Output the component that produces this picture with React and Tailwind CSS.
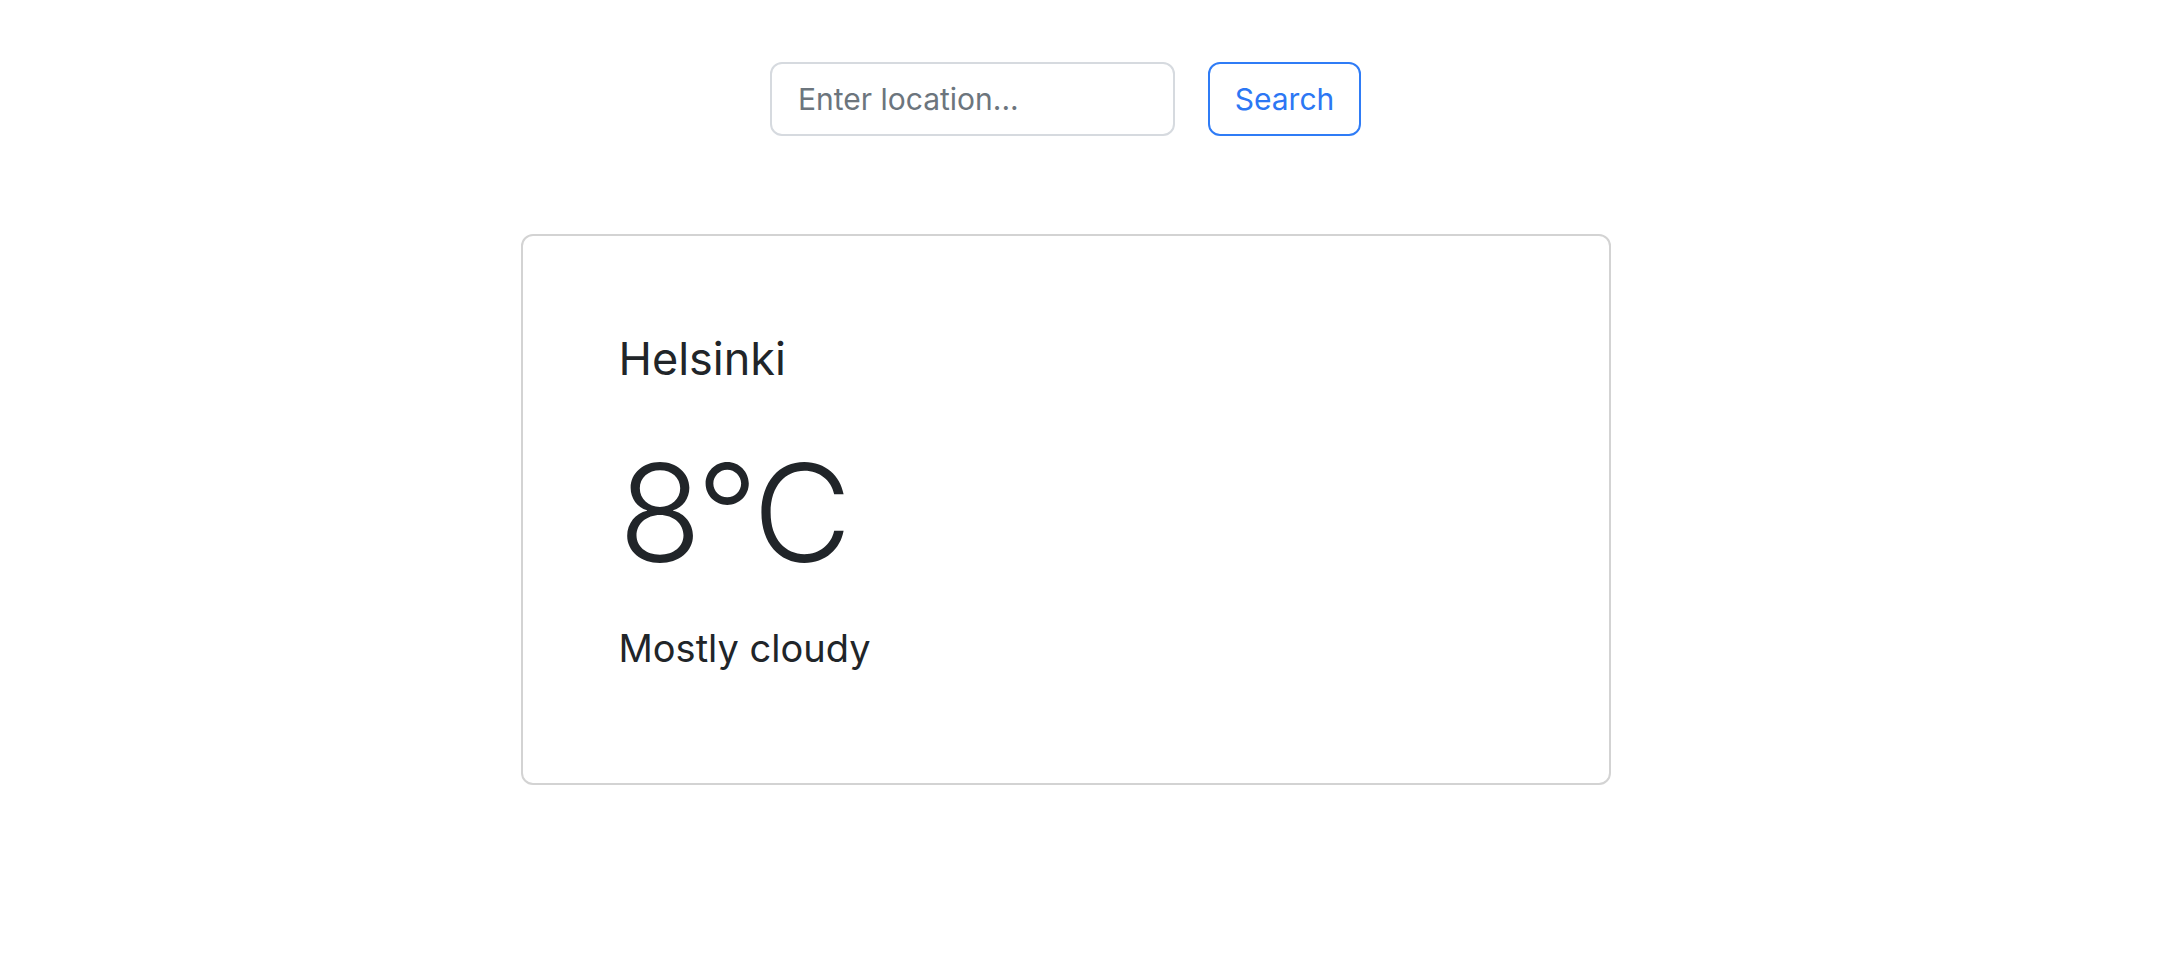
import { useState } from "react";

export default function App() {
  const [query, setQuery] = useState("");

  return (
    <div
      className="min-h-screen bg-white pr-[52px] text-[#212529]"
      style={{ fontFamily: "Inter, 'Noto Sans', sans-serif" }}
    >
      {/* Search bar */}
      <div className="flex justify-center gap-[33px] pt-[62px]">
        <input
          type="text"
          value={query}
          onChange={(e) => setQuery(e.target.value)}
          placeholder="Enter location..."
          className="h-[74px] w-[405px] rounded-[12px] border-2 border-[#d6dadf] bg-white px-[26px] text-[30px] text-[#212529] outline-none placeholder:text-[#6c757d]"
        />
        <button className="h-[74px] w-[153px] rounded-[12px] border-2 border-[#2f7cf6] bg-white text-[30px] text-[#2c77f4]">
          Search
        </button>
      </div>

      {/* Weather card */}
      <div className="mt-[98px] flex justify-center">
        <div className="h-[551px] w-[1090px] rounded-[12px] border-2 border-[#d3d3d3] px-[96px] pt-[96px]">
          <h3 className="text-[45px] leading-[1.2] font-normal">Helsinki</h3>
          <div className="mt-[45px] text-[136px] leading-[1.2] font-light tracking-[-4px]">
            8°C
          </div>
          <p className="mt-[32px] text-[38px] leading-[1.2]">Mostly cloudy</p>
        </div>
      </div>
    </div>
  );
}
